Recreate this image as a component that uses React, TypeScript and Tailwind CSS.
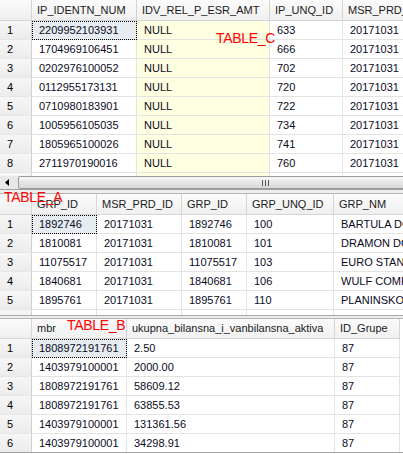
import React from "react";

type Col = { title: string; w: string; yellow?: boolean };

const FONT = "font-['Liberation_Sans',Arial,sans-serif]";

function Grid({
  cols,
  rows,
  headH,
  boxH,
  extraRows = 1,
}: {
  cols: Col[];
  rows: string[][];
  headH: string;
  boxH: string;
  extraRows?: number;
}) {
  const all = [...rows, ...Array.from({ length: extraRows }, () => cols.map(() => ""))];
  return (
    <div className={`${boxH} w-full overflow-hidden bg-white`}>
      <div className={`flex ${headH} w-max`}>
        <div className="w-[32px] shrink-0 border-r border-b border-[#d5d5d5] bg-[linear-gradient(to_bottom,#fbfbfb,#efefef)]" />
        {cols.map((c, i) => (
          <div
            key={i}
            className={`${c.w} shrink-0 border-r border-b border-[#d5d5d5] bg-[linear-gradient(to_bottom,#fbfbfb,#f0f0f0)] pl-[5px] flex items-center text-[11px] text-[#1a1a1a] whitespace-nowrap overflow-hidden`}
          >
            {c.title}
          </div>
        ))}
      </div>
      {all.map((r, ri) => (
        <div key={ri} className="flex h-[19px] w-max">
          <div className="w-[32px] shrink-0 border-r border-b border-r-[#d0d0d0] border-b-[#e6e6e6] bg-[linear-gradient(to_bottom,#f6f6f6,#ececec)] pl-[7px] flex items-center text-[11px] text-black">
            {ri < rows.length ? String(ri + 1) : ""}
          </div>
          {cols.map((c, ci) => {
            const sel = ri === 0 && ci === 0;
            return (
              <div
                key={ci}
                className={`${c.w} shrink-0 border-r border-b border-[#e3e3e3] pl-[7px] flex items-center text-[11px] text-[#0a0a1e] whitespace-nowrap overflow-hidden ${
                  sel
                    ? "bg-[#e7ecf1] outline-1 outline-dotted outline-black -outline-offset-1"
                    : c.yellow
                    ? "bg-[#ffffe1]"
                    : "bg-white"
                }`}
              >
                {r[ci]}
              </div>
            );
          })}
        </div>
      ))}
    </div>
  );
}

function Splitter() {
  return <div className="h-[5px] border-t border-b border-t-[#a0a0a0] border-b-[#b4b4b4] bg-[#ededed]" />;
}

function Splitter2() {
  return <div className="h-[4px] border-t border-b border-t-[#a8a8a8] border-b-[#b4b4b4] bg-[#ededed]" />;
}

function HScroll() {
  return (
    <div className="h-[13px] flex bg-[#e8e8e8] overflow-hidden">
      <div className="w-[18px] shrink-0 flex items-center pl-[5px]">
        <svg width="4" height="7" viewBox="0 0 4 7">
          <polygon points="4,0 0,3.5 4,7" fill="#000" />
        </svg>
      </div>
      <div className="flex-1 -mr-[8px] rounded-[2px] border border-[#9a9a9a] bg-[linear-gradient(to_bottom,#f8f8f8,#e6e6e6_50%,#d8d8d8)] flex items-center pl-[243px]">
        <div className="flex gap-[2px]">
          <div className="w-[1px] h-[6px] bg-[#555]" />
          <div className="w-[1px] h-[6px] bg-[#555]" />
          <div className="w-[1px] h-[6px] bg-[#555]" />
        </div>
      </div>
    </div>
  );
}

const colsC: Col[] = [
  { title: "IP_IDENTN_NUM", w: "w-[105px]" },
  { title: "IDV_REL_P_ESR_AMT", w: "w-[133px]", yellow: true },
  { title: "IP_UNQ_ID", w: "w-[73px]" },
  { title: "MSR_PRD_ID", w: "w-[100px]" },
];
const rowsC = [
  ["2209952103931", "NULL", "633", "20171031"],
  ["1704969106451", "NULL", "666", "20171031"],
  ["0202976100052", "NULL", "702", "20171031"],
  ["0112955173131", "NULL", "720", "20171031"],
  ["0710980183901", "NULL", "722", "20171031"],
  ["1005956105035", "NULL", "734", "20171031"],
  ["1805965100026", "NULL", "741", "20171031"],
  ["2711970190016", "NULL", "760", "20171031"],
];

const colsA: Col[] = [
  { title: "GRP_ID", w: "w-[65px]" },
  { title: "MSR_PRD_ID", w: "w-[85px]" },
  { title: "GRP_ID", w: "w-[65px]" },
  { title: "GRP_UNQ_ID", w: "w-[87px]" },
  { title: "GRP_NM", w: "w-[120px]" },
];
const rowsA = [
  ["1892746", "20171031", "1892746", "100", "BARTULA DOO"],
  ["1810081", "20171031", "1810081", "101", "DRAMON DOO"],
  ["11075517", "20171031", "11075517", "103", "EURO STANDARD"],
  ["1840681", "20171031", "1840681", "106", "WULF COMPANY"],
  ["1895761", "20171031", "1895761", "110", "PLANINSKO"],
];

const colsB: Col[] = [
  { title: "mbr", w: "w-[95px]" },
  { title: "ukupna_bilansna_i_vanbilansna_aktiva", w: "w-[208px]" },
  { title: "ID_Grupe", w: "w-[65px]" },
];
const rowsB = [
  ["1808972191761", "2.50", "87"],
  ["1403979100001", "2000.00", "87"],
  ["1808972191761", "58609.12", "87"],
  ["1808972191761", "63855.53", "87"],
  ["1403979100001", "131361.56", "87"],
  ["1403979100001", "34298.91", "87"],
];

export default function App() {
  return (
    <div className={`relative w-[403px] h-[454px] bg-white overflow-hidden ${FONT}`}>
      <Grid cols={colsC} rows={rowsC} headH="h-[21px]" boxH="h-[176px]" />
      <HScroll />
      <Splitter />
      <Grid cols={colsA} rows={rowsA} headH="h-[21px]" boxH="h-[121px]" />
      <Splitter2 />
      <div className="border-b border-[#a0a0a0] w-[403px]">
        <Grid cols={colsB} rows={rowsB} headH="h-[20px]" boxH="h-[133px]" extraRows={0} />
      </div>

      <div className="absolute left-[216px] top-[30px] text-[14px] leading-[16px] text-[#ff0000] tracking-[-0.3px]">TABLE_C</div>
      <div className="absolute left-[4px] top-[189px] text-[14px] leading-[16px] text-[#ff0000] tracking-[-0.3px]">TABLE_A</div>
      <div className="absolute left-[67px] top-[317px] text-[14px] leading-[16px] text-[#ff0000] tracking-[-0.3px]">TABLE_B</div>
    </div>
  );
}
